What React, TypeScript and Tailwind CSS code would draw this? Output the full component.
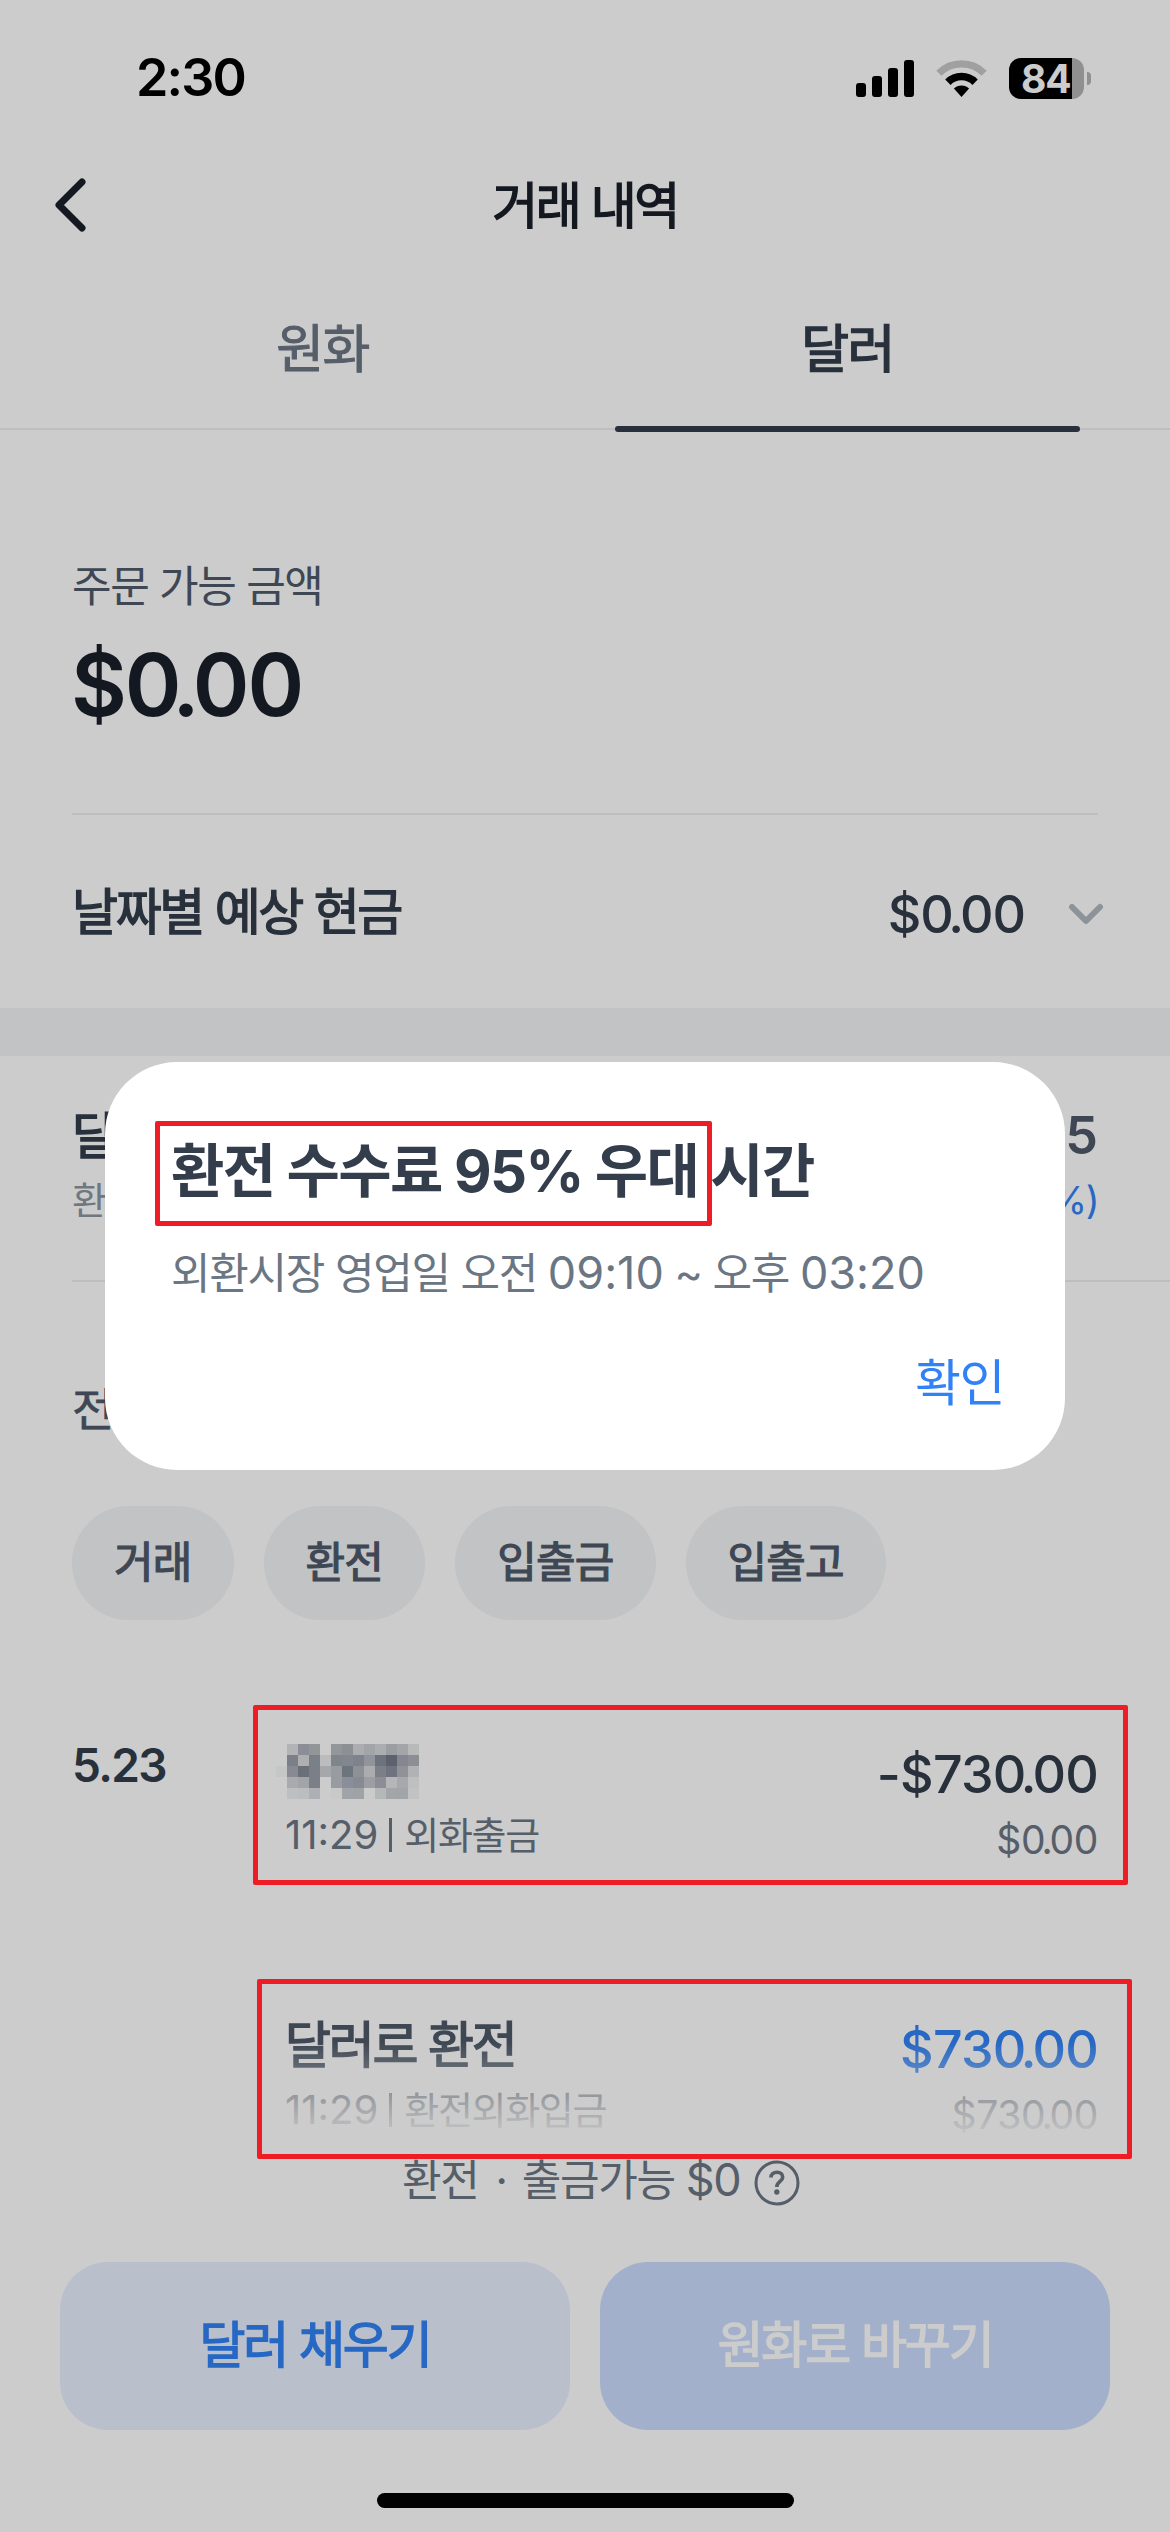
import { ReactNode } from "react";

const FILTERS = ["거래", "환전", "입출금", "입출고"];

// Semibold hangul, between the regular and bold cuts of the font
const SEMIBOLD = "font-normal [-webkit-text-stroke:0.028em]";

// Pixelated account name, one colour per 11px cell
const NAME_MOSAIC = [
  ["", "#b1b3b4", "#8b8e97", "#929699", "", "#92979b", "#8d9093", "#abadb0", "#a1a5a7", "#abadb1", "#9a9da1", "#a3a6a9", "#b8baba"],
  ["", "#7a7f88", "#adafb1", "#7a8087", "#bbbcbd", "#80848b", "#82868e", "#7e828a", "#91959b", "#6c737c", "#5c626d", "#848790", "#8b8e95"],
  ["#c5c7c6", "#878a93", "#6b6f7a", "#7b8088", "#a5a7aa", "#989ca1", "#6c757e", "#8d9095", "#abacaf", "#7b7f87", "#6e737f", "#8f9298", "#b0b2b4"],
  ["", "#a8aaae", "#a1a5a8", "#7b8088", "", "#989ca1", "#8a8e98", "#868a93", "#9b9ea3", "#8b8e94", "#b4b6b7", "#a6a8ab", "#bdbfc1"],
  ["", "#bdbfc1", "#bbbdbf", "#adafb4", "", "#c9c9c9", "#a0a4a8", "#9fa3a6", "#cbcbcb", "#b5b8b9", "#a3a6a9", "#a2a5a8", "#c2c2c2"],
];

// Dollar amount with the decimal point kerned in
function Amount({ value, className }: { value: string; className: string }) {
  const dot = value.indexOf(".");
  return (
    <span className={`whitespace-nowrap ${className}`}>
      {value.slice(0, dot - 1)}
      <span className="tracking-[-0.08em]">{value.slice(dot - 1, dot + 1)}</span>
      {value.slice(dot + 1)}
    </span>
  );
}

function StatusBar() {
  return (
    <div className="flex h-[156px] items-center justify-between pl-[136px] pr-[79px]">
      <span className="text-[52px] leading-[60px] font-semibold tracking-[-0.035em] text-black">
        2:30
      </span>
      <div className="flex items-center">
        <svg width="58" height="37" viewBox="0 0 58 37">
          <rect x="0" y="23" width="10" height="14" rx="3" />
          <rect x="16" y="16" width="10" height="21" rx="3" />
          <rect x="32" y="8" width="10" height="29" rx="3" />
          <rect x="48" y="0" width="10" height="37" rx="3" />
        </svg>
        <svg className="ml-[22px]" width="51" height="37" viewBox="0 0 51 37" fill="none">
          <path d="M2.9 13.2A31.9 31.9 0 0 1 48.1 13.2" stroke="#c9c9c9" strokeWidth="7.2" />
          <path d="M11.9 22.2A19.2 19.2 0 0 1 39.1 22.2" stroke="#000" strokeWidth="7.6" />
          <path d="M25.5 37L17.9 28.6A10.8 10.8 0 0 1 33.1 28.6Z" fill="#000" />
        </svg>
        <div className="ml-[22px] flex h-[41px] w-[75px] items-center rounded-[12px] bg-[linear-gradient(to_right,#000_63px,#b4b4b4_63px)] pl-[12px]">
          <span className="text-[39px] leading-[41px] font-bold tracking-[-0.03em] text-white">84</span>
        </div>
        <div className="ml-[3px] h-[13px] w-[4px] rounded-r-full bg-[#b4b4b4]" />
      </div>
    </div>
  );
}

function Tab({ label, active }: { label: string; active?: boolean }) {
  return (
    <div
      className={`relative w-[525px] pt-[66px] text-center text-[52px] leading-[60px] tracking-[-0.03em] ${
        active
          ? "text-[#333d4b] [-webkit-text-stroke:0.03em]"
          : "text-[#6b7684] [-webkit-text-stroke:0.018em]"
      }`}
    >
      {label}
      {active && (
        <div className="absolute -bottom-[4px] left-[30px] h-[6px] w-[465px] rounded-full bg-[#333d4b]" />
      )}
    </div>
  );
}

interface TransactionProps {
  date?: string;
  title?: string;
  time: string;
  kind: string;
  amount: ReactNode;
  balance: string;
}

function Transaction({ date, title, time, kind, amount, balance }: TransactionProps) {
  return (
    <div className="flex">
      <div className="-mt-[5px] w-[213px] text-[46px] leading-[60px] font-semibold tracking-[-0.035em] text-[#333d4b]">
        {date}
      </div>
      <div className="flex-1">
        <div className={`h-[60px] text-[50px] leading-[60px] tracking-[-0.045em] text-[#4e5968] ${SEMIBOLD}`}>
          {title}
        </div>
        <div className="mt-[10px] flex items-center text-[38px] leading-[50px] tracking-[-0.035em] whitespace-nowrap text-[#6b7684]">
          <span className="text-[40px] tracking-normal">{time}</span>
          <span className="mr-[12px] ml-[11px] h-[34px] w-[3px] bg-[#6b7684]" />
          {kind}
        </div>
      </div>
      <div className="flex flex-col items-end pt-[5px]">
        <div className="text-[52px] leading-[60px]">{amount}</div>
        <div className="mt-[10px] text-[39px] leading-[50px] text-[#6b7684]">
          <Amount value={balance} className="tracking-[-0.01em]" />
        </div>
      </div>
    </div>
  );
}

function Footer() {
  return (
    <div className="absolute inset-x-0 bottom-0">
      <div className="h-[99px] bg-linear-to-b from-white/0 to-white" />
      <div className="h-[391px] bg-white pt-[9px]">
        <div className="flex items-center pl-[402px] text-[43px] leading-[60px] tracking-[-0.03em] whitespace-nowrap text-[#6b7684]">
          <span>환전</span>
          <span className="mr-[15px] ml-[17px]">·</span>
          <span>출금가능</span>
          <span className="ml-[11px] text-[45px]">$0</span>
          <svg className="mt-[5px] ml-[14px]" width="46" height="46" viewBox="0 0 46 46" fill="none" stroke="#6b7684">
            <circle cx="23" cy="23" r="21" strokeWidth="3" />
            <path d="M17 17.500C17 14 19.500 12.200 23 12.200C26.500 12.200 28.700 14.300 28.700 17.200C28.700 21.500 22.800 21.500 22.800 27" strokeWidth="3.600" />
            <circle cx="22.800" cy="32" r="2.700" fill="#6b7684" stroke="none" />
          </svg>
        </div>
        <div
          className={`mt-[52px] flex gap-[30px] px-[60px] text-center text-[50px] leading-[166px] tracking-[-0.043em] ${SEMIBOLD}`}
        >
          <div className="h-[168px] flex-1 rounded-[48px] bg-[#e8f1ff] text-[#3182f6]">달러 채우기</div>
          <div className="h-[168px] flex-1 rounded-[48px] bg-[#cbddfe] text-white">원화로 바꾸기</div>
        </div>
        <div className="mx-auto mt-[63px] h-[15px] w-[417px] rounded-full bg-black" />
      </div>
    </div>
  );
}

export default function App() {
  return (
    <div className="relative h-[2532px] w-[1170px] overflow-hidden bg-white font-['Inter','Noto_Sans_CJK_KR',sans-serif]">
      <StatusBar />

      <div className="relative flex h-[98px] items-center justify-center">
        <svg className="absolute top-[22px] left-[54px]" width="32" height="54" viewBox="0 0 32 54" fill="none">
          <path d="M28 4L5 27L28 50" stroke="#191f28" strokeWidth="7" strokeLinecap="round" strokeLinejoin="round" />
        </svg>
        <h1 className={`mt-[2px] text-[50px] leading-[60px] tracking-[-0.05em] text-[#191f28] ${SEMIBOLD}`}>
          거래 내역
        </h1>
      </div>

      <div className="flex h-[176px] justify-center border-b-2 border-[#eeeeee]">
        <Tab label="원화" />
        <Tab label="달러" active />
      </div>

      <div className="px-[72px] pt-[126px]">
        <div className="text-[43px] leading-[60px] tracking-[-0.032em] text-[#4e5968]">주문 가능 금액</div>
        <div className="mt-[19px] -ml-[1px] text-[86px] leading-[100px] font-semibold text-[#191f28]">
          <Amount value="$0.00" className="tracking-[-0.025em]" />
        </div>
        <div className="mt-[78px] h-[2px] bg-[#eeeeee]" />
        <div className="flex h-[193px] items-center text-[#333d4b]">
          <div className={`flex-1 text-[50px] leading-[60px] tracking-[-0.047em] ${SEMIBOLD}`}>날짜별 예상 현금</div>
          <div className="mt-[6px] text-[52px] leading-[60px] font-medium">
            <Amount value="$0.00" className="tracking-[-0.02em]" />
          </div>
          <svg className="mt-[4px] -mr-[6px] ml-[43px]" width="36" height="22" viewBox="0 0 36 22" fill="none">
            <path d="M4 4L18 18L32 4" stroke="#b0b8c1" strokeWidth="6" strokeLinecap="round" strokeLinejoin="round" />
          </svg>
        </div>
      </div>

      <div className="h-[48px] bg-[#f2f4f6]" />

      <div className="px-[72px] pt-[50px]">
        <div className="flex justify-between text-[50px] leading-[60px] text-[#333d4b]">
          <span className={SEMIBOLD}>달</span>
          <span className="text-[52px] font-semibold text-[#4e5968]">5</span>
        </div>
        <div className="mt-[9px] flex justify-between text-[38px] leading-[50px] text-[#8b95a1]">
          <span>환</span>
          <span className="tracking-[-0.04em] text-[#3182f6]">%)</span>
        </div>
      </div>
      <div className="mt-[55px] ml-[72px] h-[2px] bg-[#eeeeee]" />

      <div className="px-[72px] pt-[97px]">
        <div className="text-[46px] leading-[60px] text-[#4e5968] [-webkit-text-stroke:0.014em]">전</div>
        <div className="mt-[67px] flex gap-[30px]">
          {FILTERS.map((filter) => (
            <div
              key={filter}
              className={`h-[114px] rounded-full bg-[#f2f4f6] px-[42px] text-[43px] leading-[112px] tracking-[-0.018em] text-[#4e5968] ${SEMIBOLD}`}
            >
              {filter}
            </div>
          ))}
        </div>
        <div className="mt-[120px] flex flex-col gap-[150px]">
          <Transaction
            date="5.23"
            time="11:29"
            kind="외화출금"
            balance="$0.00"
            amount={<Amount value="-$730.00" className="font-medium tracking-[-0.015em] text-[#333d4b]" />}
          />
          <Transaction
            title="달러로 환전"
            time="11:29"
            kind="환전외화입금"
            balance="$730.00"
            amount={<Amount value="$730.00" className="font-medium tracking-[-0.015em] text-[#3182f6]" />}
          />
        </div>
      </div>

      <Footer />

      {/* Dimmed backdrop and dialog */}
      <div className="absolute inset-0 bg-black/20" />
      <div className="absolute top-[1062px] left-[105px] flex h-[408px] w-[960px] flex-col rounded-[72px] bg-white px-[66px] pt-[74px] whitespace-nowrap">
        <h2 className="text-[58px] leading-[70px] font-bold tracking-[-0.028em] text-[#333d4b]">
          환전 수수료 95% 우대 시간
        </h2>
        <p className="mt-[37px] text-[43px] leading-[60px] tracking-[-0.03em] text-[#6b7684]">
          외환시장 영업일 오전 <span className="text-[45px] tracking-normal">09:10</span> ~ 오후{" "}
          <span className="text-[45px] tracking-normal">03:20</span>
        </p>
        <button className="mt-[50px] mr-[-5px] self-end text-[50px] leading-[60px] tracking-[-0.03em] text-[#3182f6]">
          확인
        </button>
      </div>

      {/* Highlights */}
      <svg className="absolute top-[1744px] left-[276px]" width="143" height="55" shapeRendering="crispEdges">
        {NAME_MOSAIC.map((row, y) =>
          row.map((fill, x) =>
            fill ? <rect key={`${x}-${y}`} x={x * 11} y={y * 11} width="11" height="11" fill={fill} /> : null
          )
        )}
      </svg>
      <div className="absolute top-[1121px] left-[155px] h-[105px] w-[557px] rounded-[2px] border-[5px] border-[#ee1d25]" />
      <div className="absolute top-[1705px] left-[253px] h-[180px] w-[875px] rounded-[2px] border-[5px] border-[#ee1d25]" />
      <div className="absolute top-[1979px] left-[257px] h-[180px] w-[875px] rounded-[2px] border-[5px] border-[#ee1d25]" />
    </div>
  );
}
